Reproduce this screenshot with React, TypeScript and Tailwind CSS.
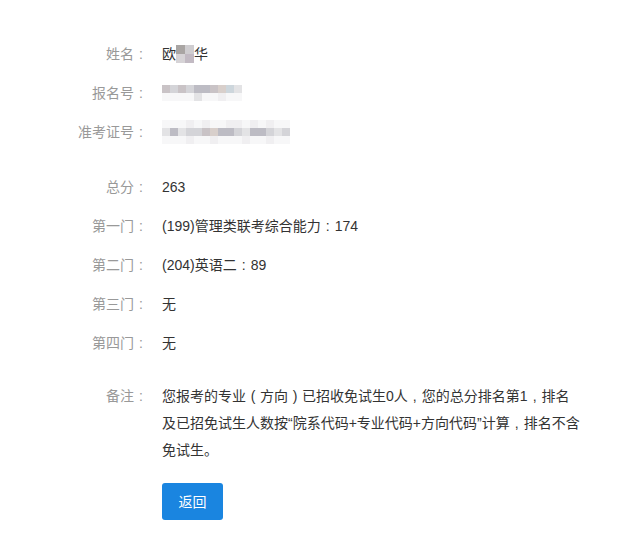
import React from 'react';

const font = { fontFamily: '"Liberation Sans", "Noto Sans CJK SC", sans-serif' };

// full-width punctuation with the mark centred in its 14px cell, as in the screenshot
function P({ c }: { c: string }) {
  return <span className="inline-block w-[14px] text-center">{c}</span>;
}

// mosaic placeholder for blurred personal info
function Mosaic({ cols, shades }: { cols: number; shades: string[] }) {
  const tone: Record<string, string> = {
    a: 'bg-[#c9c3c6]',
    b: 'bg-[#d4d4d8]',
    c: 'bg-[#e3e3e5]',
    d: 'bg-[#f0eff1]',
    e: 'bg-[#bdbcc4]',
    f: 'bg-[#f7f7f8]',
    g: 'bg-[#d8cfcb]',
    h: 'bg-[#cdd6dc]',
  };
  return (
    <div className="flex flex-col">
      {shades.map((row, r) => (
        <div key={r} className="flex">
          {Array.from({ length: cols }).map((_, c) => (
            <div key={c} className={`w-2 h-2 ${tone[row[c % row.length]] || 'bg-[#eee]'}`} />
          ))}
        </div>
      ))}
    </div>
  );
}

function Row({ label, children }: { label: string; children: React.ReactNode }) {
  return (
    <div className="flex items-center h-[39px]">
      <div className="w-[148px] text-right text-[#999] shrink-0">
        {label}
        <P c=":" />
      </div>
      <div className="pl-[14px] text-[#333]">{children}</div>
    </div>
  );
}

export default function App() {
  return (
    <div className="w-[631px] h-[552px] bg-white text-[14px] leading-[20px]" style={font}>
      <div className="pt-[34px]">
        <Row label="姓名">
          <span className="flex items-center">
            欧
            <span className="inline-flex flex-col">
              <span className="flex">
                <span className="w-[9px] h-[9px] bg-[#a9a5a3]" />
                <span className="w-[9px] h-[9px] bg-[#cfcdd0]" />
              </span>
              <span className="flex">
                <span className="w-[9px] h-[9px] bg-[#d6d3d6]" />
                <span className="w-[9px] h-[9px] bg-[#c2bac3]" />
              </span>
            </span>
            华
          </span>
        </Row>
        <Row label="报名号">
          <Mosaic cols={10} shades={['ababeeaghc', 'ffffcffdff']} />
        </Row>
        <Row label="准考证号">
          <Mosaic cols={16} shades={['fffdfdffddfdfdff', 'cecbbageebceebcb', 'fffdffdfffdffdff']} />
        </Row>
      </div>
      <div className="mt-[16px]">
        <Row label="总分">263</Row>
        <Row label="第一门">
          (199)管理类联考综合能力<P c=":" />174
        </Row>
        <Row label="第二门">
          (204)英语二<P c=":" />89
        </Row>
        <Row label="第三门">无</Row>
        <Row label="第四门">无</Row>
      </div>
      <div className="flex mt-[21px] leading-[27px]">
        <div className="w-[148px] text-right text-[#999] shrink-0">
          备注<P c=":" />
        </div>
        <div className="pl-[14px] text-[#333] w-[450px]">
          您报考的专业<P c="(" />方向<P c=")" />已招收免试生0人<P c="," />您的总分排名第1<P c="," />排名
          <br />
          及已招免试生人数按“院系代码+专业代码+方向代码”计算<P c="," />排名不含
          <br />
          免试生。
        </div>
      </div>
      <div className="pl-[162px] mt-[19px]">
        <button className="w-[61px] h-[37px] bg-[#1a85e0] text-white rounded-[3px] text-[14px]">返回</button>
      </div>
    </div>
  );
}
